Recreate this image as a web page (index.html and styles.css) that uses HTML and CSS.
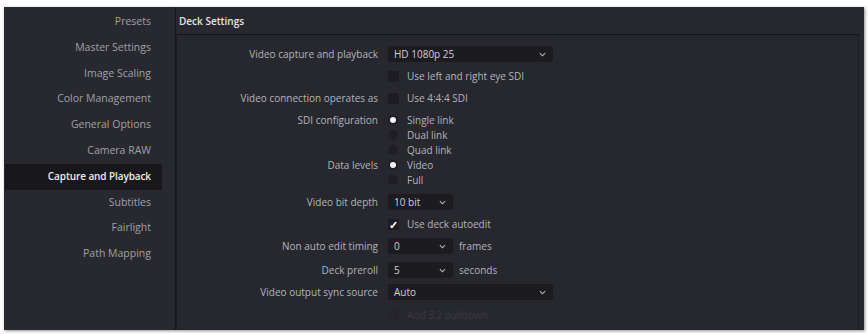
FILE: index.html
```html
<!DOCTYPE html>
<html lang="en">

<head>
  <meta charset="utf-8">
  <title>Capture and Playback</title>
  <link rel="stylesheet" href="styles.css">
</head>

<body>
  <div class="window">
    <nav class="sidebar">
      <div class="nav-item">Presets</div>
      <div class="nav-item">Master Settings</div>
      <div class="nav-item">Image Scaling</div>
      <div class="nav-item">Color Management</div>
      <div class="nav-item">General Options</div>
      <div class="nav-item">Camera RAW</div>
      <div class="nav-item active">Capture and Playback</div>
      <div class="nav-item">Subtitles</div>
      <div class="nav-item">Fairlight</div>
      <div class="nav-item">Path Mapping</div>
    </nav>

    <main class="main">
      <header class="main-header">Deck Settings</header>
      <section class="panel">
        <div class="row">
          <span class="label">Video capture and playback</span>
          <div class="select wide"><span>HD 1080p 25</span><svg class="chev" viewBox="0 0 8 5"><path d="M1 1l3 3 3-3" /></svg></div>
        </div>
        <div class="row">
          <span class="label"></span>
          <span class="check"></span><span class="opt">Use left and right eye SDI</span>
        </div>
        <div class="row">
          <span class="label">Video connection operates as</span>
          <span class="check"></span><span class="opt">Use 4:4:4 SDI</span>
        </div>

        <div class="row radio-row first-radio">
          <span class="label">SDI configuration</span>
          <span class="radio on"></span><span class="opt">Single link</span>
        </div>
        <div class="row radio-row">
          <span class="label"></span>
          <span class="radio"></span><span class="opt">Dual link</span>
        </div>
        <div class="row radio-row">
          <span class="label"></span>
          <span class="radio"></span><span class="opt">Quad link</span>
        </div>
        <div class="row radio-row">
          <span class="label">Data levels</span>
          <span class="radio on"></span><span class="opt">Video</span>
        </div>
        <div class="row radio-row">
          <span class="label"></span>
          <span class="radio"></span><span class="opt">Full</span>
        </div>

        <div class="row gap-4">
          <span class="label">Video bit depth</span>
          <div class="select narrow"><span>10 bit</span><svg class="chev" viewBox="0 0 8 5"><path d="M1 1l3 3 3-3" /></svg></div>
        </div>
        <div class="row">
          <span class="label"></span>
          <span class="check checked">&#10003;</span><span class="opt">Use deck autoedit</span>
        </div>
        <div class="row">
          <span class="label">Non auto edit timing</span>
          <div class="select narrow"><span>0</span><svg class="chev" viewBox="0 0 8 5"><path d="M1 1l3 3 3-3" /></svg></div>
          <span class="unit">frames</span>
        </div>
        <div class="row gap-2">
          <span class="label">Deck preroll</span>
          <div class="select narrow"><span>5</span><svg class="chev" viewBox="0 0 8 5"><path d="M1 1l3 3 3-3" /></svg></div>
          <span class="unit">seconds</span>
        </div>
        <div class="row">
          <span class="label">Video output sync source</span>
          <div class="select wide"><span>Auto</span><svg class="chev" viewBox="0 0 8 5"><path d="M1 1l3 3 3-3" /></svg></div>
        </div>
        <div class="row disabled gap-1">
          <span class="label"></span>
          <span class="check"></span><span class="opt">Add 3:2 pulldown</span>
        </div>
      </section>
    </main>
  </div>
</body>

</html>
```

FILE: styles.css
```css
body,
html {
  margin: 0;
  padding: 0;
  height: 100%;
  background-color: #ffffff;
  font-family: "Open Sans", sans-serif;
}

.window {
  display: flex;
  margin: 7px 4px 0 4px;
  width: 860px;
  height: 323px;
  background-color: #28282f;
  box-shadow: 1px 1px 3px rgba(0, 0, 0, 0.45);
  overflow: hidden;
}

/* left navigation */
.sidebar {
  width: 157px;
  padding: 2px 13px 0 1px;
  border-right: 1px solid #17171b;
  flex-shrink: 0;
}

.nav-item {
  height: 25.8px;
  line-height: 25.8px;
  padding-right: 11px;
  text-align: right;
  font-size: 10.5px;
  color: #a0a0a8;
}

.nav-item.active {
  background-color: #18181c;
  color: #ececee;
  font-weight: 600;
  font-size: 10px;
  letter-spacing: -0.1px;
}

/* right side */
.main {
  flex: 1;
  display: flex;
  flex-direction: column;
  padding-right: 5px;
}

.main-header {
  height: 27px;
  line-height: 29px;
  padding-left: 3px;
  font-size: 10px;
  font-weight: 600;
  color: #e4e4e8;
}

.panel {
  flex: 1;
  border-top: 1px solid #141418;
  border-right: 1px solid #1d1d22;
  border-left: 1px solid #1d1d22;
  background-color: #27272e;
  padding-top: 8px;
  display: flex;
  flex-direction: column;
}

.row {
  display: flex;
  align-items: center;
  height: 22px;
  font-size: 10px;
  color: #b4b4ba;
}

.radio-row {
  height: 15px;
}

.first-radio {
  margin-top: 3px;
}

.gap-4 {
  margin-top: 4px;
}

.gap-2 {
  margin-top: 2px;
}

.gap-1 {
  margin-top: 1px;
}

.label {
  width: 201px;
  margin-right: 10px;
  text-align: right;
  white-space: nowrap;
}

.select {
  display: flex;
  align-items: center;
  justify-content: space-between;
  height: 16px;
  padding: 0 7px 0 6px;
  background-color: #1b1b20;
  border-radius: 2px;
  color: #cfcfd4;
  box-sizing: border-box;
}

.select.wide {
  width: 165px;
}

.select.narrow {
  width: 65px;
}

.chev {
  width: 7px;
  height: 5px;
  fill: none;
  stroke: #b8b8be;
  stroke-width: 1.2;
}

.unit {
  margin-left: 6px;
}

.check {
  width: 11px;
  height: 11px;
  background-color: #1c1c22;
  border-radius: 1px;
  margin-right: 8px;
  display: flex;
  align-items: center;
  justify-content: center;
  color: #ffffff;
  font-size: 11px;
  font-weight: 700;
}

.radio {
  width: 10px;
  height: 10px;
  border-radius: 50%;
  background-color: #1e1e24;
  margin: 0 9px 0 0;
  position: relative;
}

.radio.on::after {
  content: "";
  position: absolute;
  left: 2px;
  top: 2px;
  width: 6px;
  height: 6px;
  border-radius: 50%;
  background-color: #f4f4f6;
}

.opt {
  white-space: nowrap;
}

.disabled {
  color: #3a3a42;
}

.disabled .check {
  background-color: #24242a;
}
```
